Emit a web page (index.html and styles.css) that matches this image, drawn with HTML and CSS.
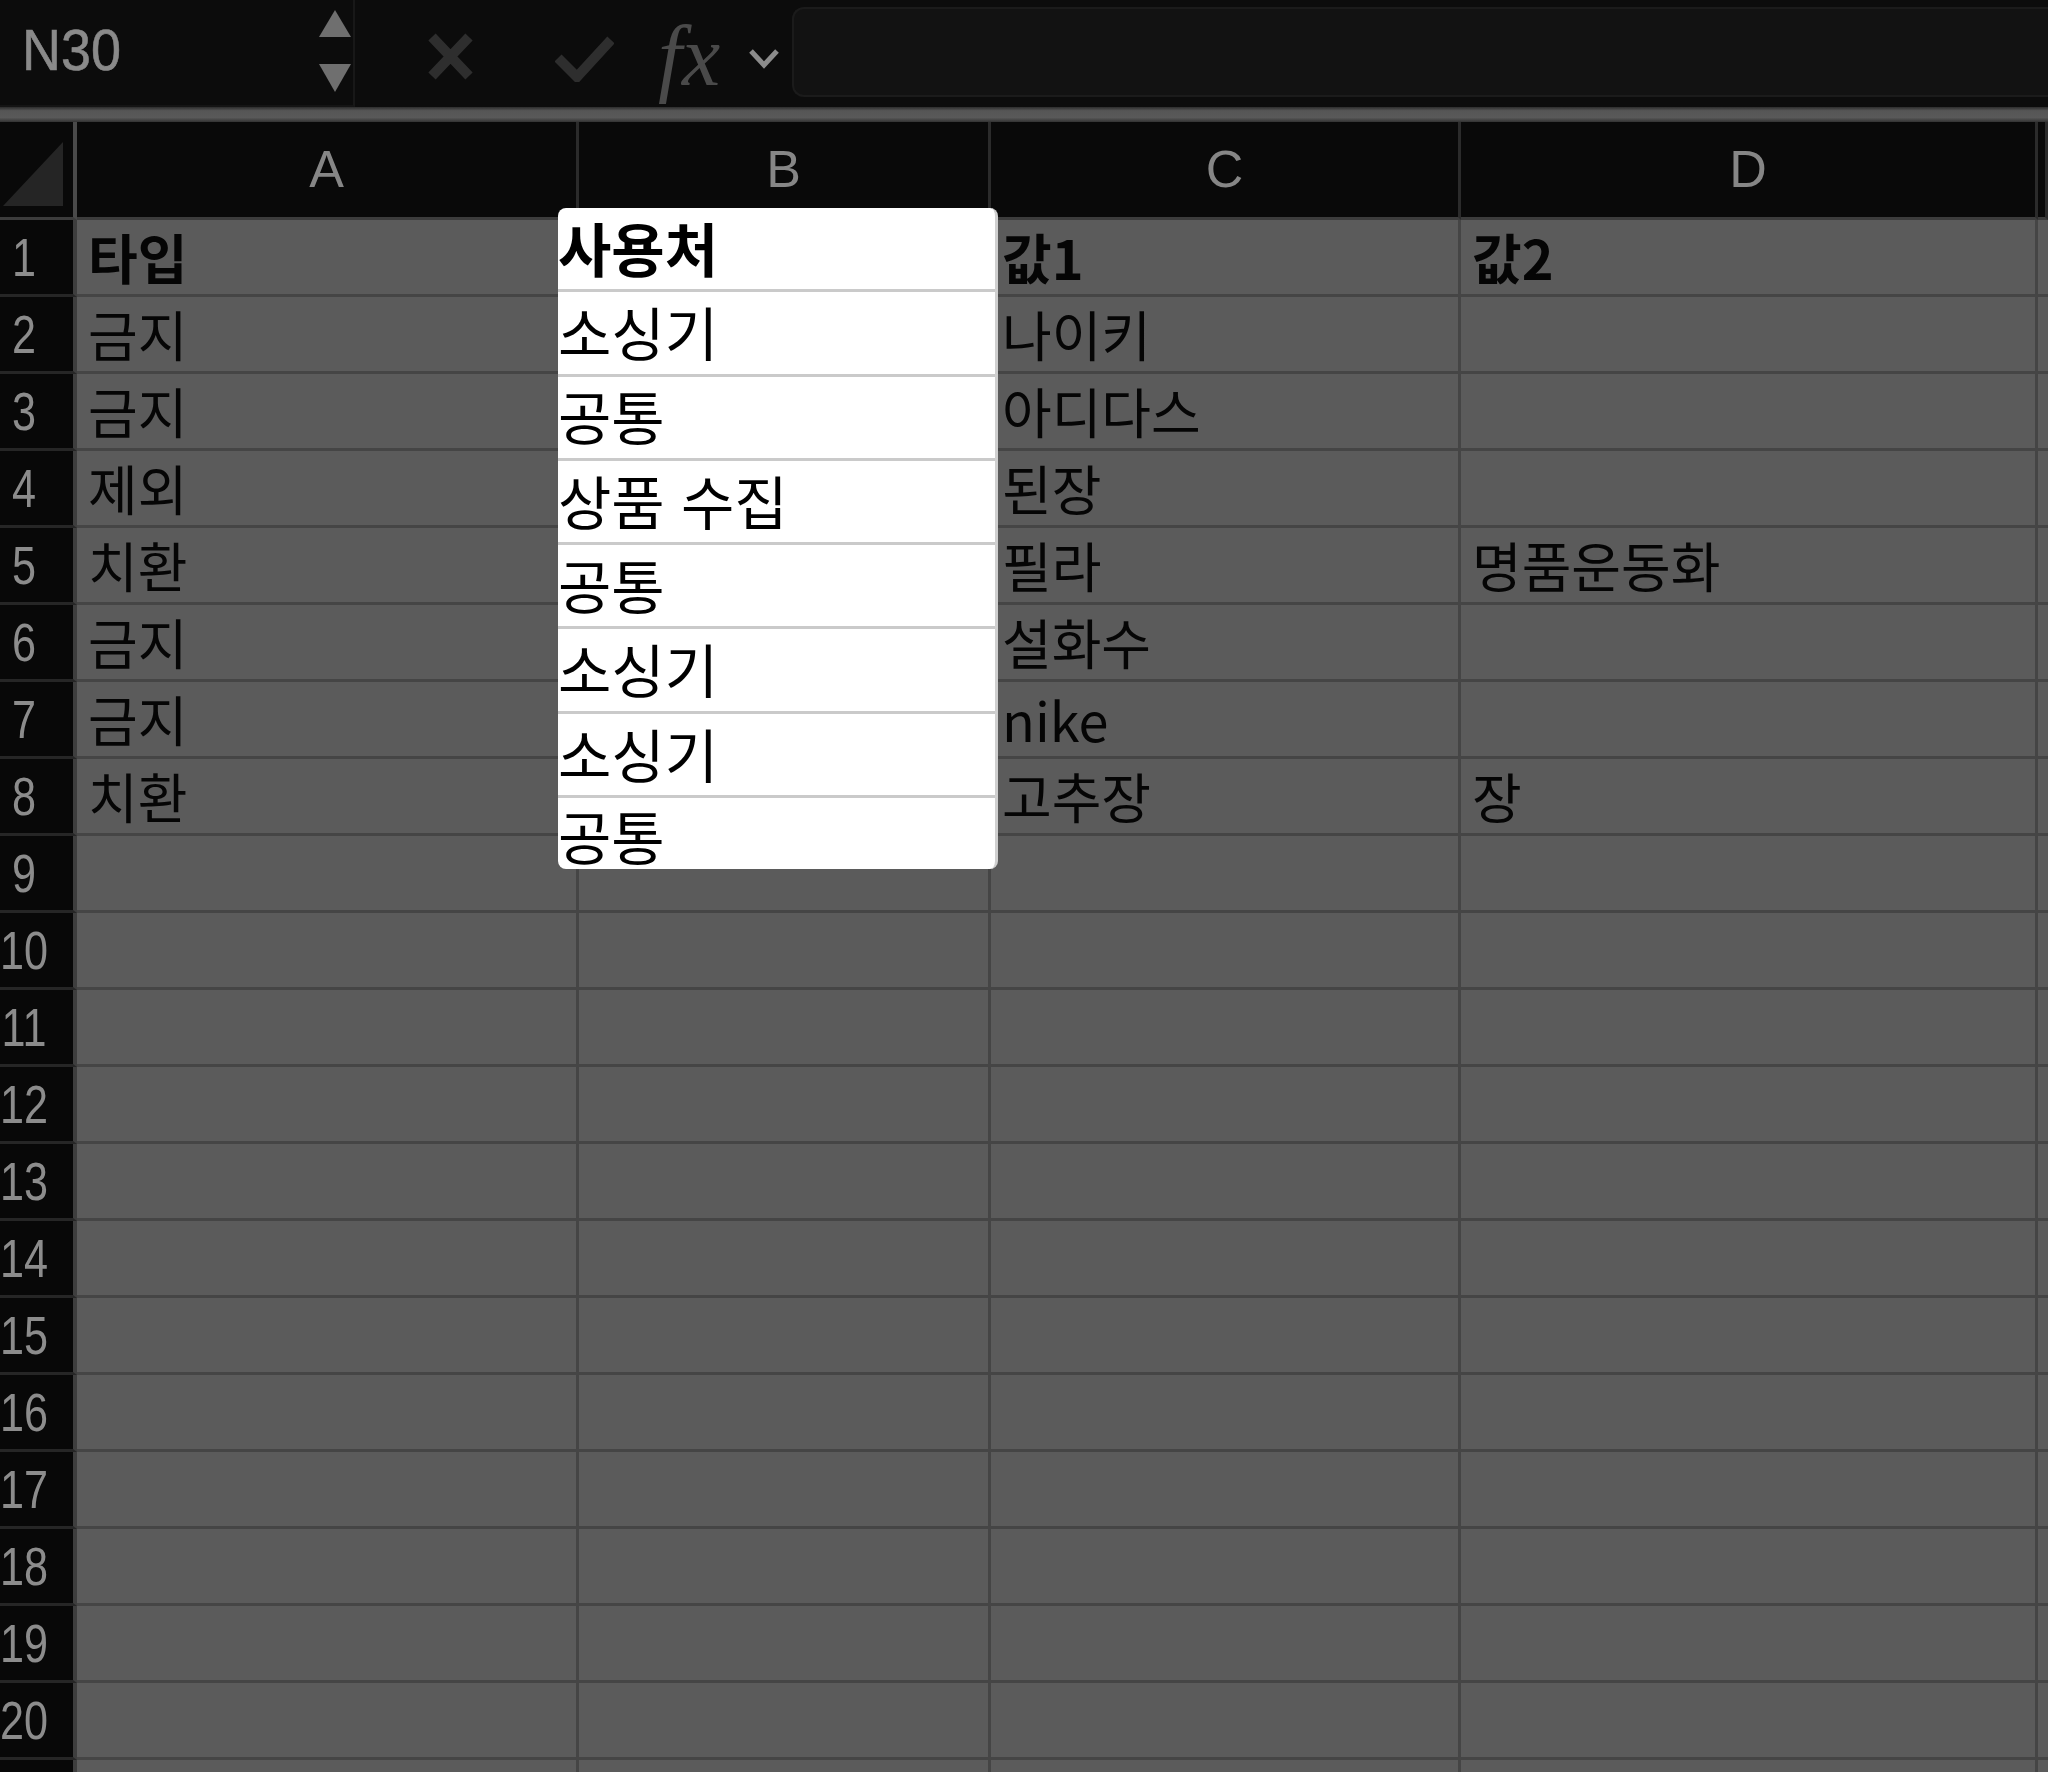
FILE: index.html
```html
<!DOCTYPE html>
<html lang="ko">
<head>
<meta charset="utf-8">
<title>Sheet</title>
<link rel="stylesheet" href="styles.css">
</head>
<body>
<div class="app">
  <div class="toolbar">
    <div class="namebox">
      <span class="name">N30</span>
      <svg class="spin" width="32" height="82" viewBox="0 0 32 82">
        <polygon points="16,0 32,27 0,27" />
        <polygon points="0,54 32,54 16,82" />
      </svg>
    </div>
    <svg class="ic-x" width="45" height="47" viewBox="0 0 45 47">
      <path d="M4 4 L41 43 M41 4 L4 43" />
    </svg>
    <svg class="ic-check" width="59" height="46" viewBox="0 0 59 46">
      <path d="M3 22 L22 41 L56 4" />
    </svg>
    <span class="fx">fx</span>
    <svg class="ic-chev" width="32" height="22" viewBox="0 0 32 22">
      <path d="M3 4 L16 18 L29 4" />
    </svg>
    <div class="formula"></div>
  </div>
  <div class="sep"></div>

  <div class="sheet">
    <div class="corner"><svg width="62" height="66" viewBox="0 0 62 66"><polygon points="0,64 60,64 60,0" /></svg></div>
    <div class="colhead">A</div>
    <div class="colhead">B</div>
    <div class="colhead">C</div>
    <div class="colhead">D</div>
    <div class="colhead"></div>

    <div class="rowhead"><span>1</span></div><div class="cell b">타입</div><div class="cell"></div><div class="cell b">값1</div><div class="cell b">값2</div><div class="cell"></div>
    <div class="rowhead"><span>2</span></div><div class="cell">금지</div><div class="cell"></div><div class="cell">나이키</div><div class="cell"></div><div class="cell"></div>
    <div class="rowhead"><span>3</span></div><div class="cell">금지</div><div class="cell"></div><div class="cell">아디다스</div><div class="cell"></div><div class="cell"></div>
    <div class="rowhead"><span>4</span></div><div class="cell">제외</div><div class="cell"></div><div class="cell">된장</div><div class="cell"></div><div class="cell"></div>
    <div class="rowhead"><span>5</span></div><div class="cell">치환</div><div class="cell"></div><div class="cell">필라</div><div class="cell">명품운동화</div><div class="cell"></div>
    <div class="rowhead"><span>6</span></div><div class="cell">금지</div><div class="cell"></div><div class="cell">설화수</div><div class="cell"></div><div class="cell"></div>
    <div class="rowhead"><span>7</span></div><div class="cell">금지</div><div class="cell"></div><div class="cell">nike</div><div class="cell"></div><div class="cell"></div>
    <div class="rowhead"><span>8</span></div><div class="cell">치환</div><div class="cell"></div><div class="cell">고추장</div><div class="cell">장</div><div class="cell"></div>
    <div class="rowhead"><span>9</span></div><div class="cell"></div><div class="cell"></div><div class="cell"></div><div class="cell"></div><div class="cell"></div>
    <div class="rowhead"><span>10</span></div><div class="cell"></div><div class="cell"></div><div class="cell"></div><div class="cell"></div><div class="cell"></div>
    <div class="rowhead"><span>11</span></div><div class="cell"></div><div class="cell"></div><div class="cell"></div><div class="cell"></div><div class="cell"></div>
    <div class="rowhead"><span>12</span></div><div class="cell"></div><div class="cell"></div><div class="cell"></div><div class="cell"></div><div class="cell"></div>
    <div class="rowhead"><span>13</span></div><div class="cell"></div><div class="cell"></div><div class="cell"></div><div class="cell"></div><div class="cell"></div>
    <div class="rowhead"><span>14</span></div><div class="cell"></div><div class="cell"></div><div class="cell"></div><div class="cell"></div><div class="cell"></div>
    <div class="rowhead"><span>15</span></div><div class="cell"></div><div class="cell"></div><div class="cell"></div><div class="cell"></div><div class="cell"></div>
    <div class="rowhead"><span>16</span></div><div class="cell"></div><div class="cell"></div><div class="cell"></div><div class="cell"></div><div class="cell"></div>
    <div class="rowhead"><span>17</span></div><div class="cell"></div><div class="cell"></div><div class="cell"></div><div class="cell"></div><div class="cell"></div>
    <div class="rowhead"><span>18</span></div><div class="cell"></div><div class="cell"></div><div class="cell"></div><div class="cell"></div><div class="cell"></div>
    <div class="rowhead"><span>19</span></div><div class="cell"></div><div class="cell"></div><div class="cell"></div><div class="cell"></div><div class="cell"></div>
    <div class="rowhead"><span>20</span></div><div class="cell"></div><div class="cell"></div><div class="cell"></div><div class="cell"></div><div class="cell"></div>
    <div class="rowhead"></div><div class="cell"></div><div class="cell"></div><div class="cell"></div><div class="cell"></div><div class="cell"></div>

    <ul class="dropdown">
      <li class="b">사용처</li>
      <li>소싱기</li>
      <li>공통</li>
      <li>상품 수집</li>
      <li>공통</li>
      <li>소싱기</li>
      <li>소싱기</li>
      <li>공통</li>
    </ul>
  </div>
</div>
</body>
</html>
```
FILE: styles.css
```css
html, body {
  margin: 0;
  padding: 0;
  background: #0c0c0c;
}
.app {
  width: 2048px;
  height: 1772px;
  overflow: hidden;
  background: #0c0c0c;
}

/* toolbar */
.toolbar {
  height: 107px;
  display: flex;
  align-items: center;
  background: #0c0c0c;
}
.namebox {
  width: 355px;
  height: 107px;
  box-sizing: border-box;
  border-right: 2px solid #181818;
  border-bottom: 2px solid #141414;
  display: flex;
  align-items: center;
  justify-content: space-between;
  padding: 0 2px 0 22px;
}
.name {
  font-family: "Liberation Sans", Arial, sans-serif;
  font-size: 58px;
  line-height: 1.15;
  color: #8a8a8a;
  display: inline-block;
  transform: scaleX(0.93);
  transform-origin: left center;
  margin-top: -4px;
  -webkit-text-stroke: 0.6px #8a8a8a;
}
.spin {
  fill: #6f6f6f;
  margin-top: -4px;
}
.ic-x {
  margin-left: 73px;
  margin-top: 6px;
  fill: none;
  stroke: #2e2e2e;
  stroke-width: 10;
}
.ic-check {
  margin-left: 82px;
  margin-top: 10px;
  fill: none;
  stroke: #2e2e2e;
  stroke-width: 10;
}
.fx {
  margin-left: 44px;
  width: 70px;
  font-family: "Liberation Serif", "Times New Roman", serif;
  font-style: italic;
  font-size: 86px;
  line-height: 1;
  color: #4a4a4a;
  margin-top: 4px;
}
.ic-chev {
  margin-left: 20px;
  margin-top: 8px;
  fill: none;
  stroke: #8c8c8c;
  stroke-width: 5;
}
.formula {
  flex: 1;
  align-self: flex-start;
  margin: 7px 0 0 12px;
  height: 90px;
  box-sizing: border-box;
  background: #121212;
  border: 2px solid #1b1b1b;
  border-right: none;
  border-radius: 12px 0 0 12px;
}

.sep {
  height: 15px;
  background: linear-gradient(#2c2c2c, #565656 25%, #595959 70%, #333333);
}

/* sheet grid */
.sheet {
  position: relative;
  display: grid;
  grid-template-columns: 77px 502px 412px 470px 577px 10px;
  grid-template-rows: 98px repeat(21, 77px);
}
.corner {
  box-sizing: border-box;
  background: #090909;
  border-right: 4px solid #4a4a4a;
  border-bottom: 3px solid #3c3c3c;
  padding: 20px 0 0 3px;
}
.corner svg {
  display: block;
  fill: #252525;
}
.colhead {
  box-sizing: border-box;
  background: #090909;
  border-right: 3px solid #2b2b2b;
  border-bottom: 3px solid #3c3c3c;
  display: flex;
  align-items: center;
  justify-content: center;
  font-family: "Liberation Sans", Arial, sans-serif;
  font-size: 52px;
  line-height: 1.15;
  color: #868686;
}
.rowhead {
  box-sizing: border-box;
  background: #080808;
  border-right: 4px solid #3e3e3e;
  border-bottom: 3px solid #262626;
  display: flex;
  align-items: center;
  justify-content: center;
  padding-right: 25px;
  font-family: "Liberation Sans", Arial, sans-serif;
  font-size: 54px;
  line-height: 1.15;
  color: #8c8c8c;
  white-space: nowrap;
}
.rowhead span {
  display: inline-block;
  transform: scaleX(0.8);
}
.cell {
  box-sizing: border-box;
  background: #5b5b5b;
  border-right: 3px solid #454545;
  border-bottom: 3px solid #454545;
  display: flex;
  align-items: center;
  padding-left: 11px;
  font-family: "Noto Sans CJK KR", "Noto Sans", sans-serif;
  font-size: 54px;
  line-height: 1.2;
  color: #050505;
  white-space: nowrap;
}
.cell.b {
  font-weight: 700;
}

/* dropdown list overlaying column B */
.dropdown {
  position: absolute;
  left: 558px;
  top: 86px;
  width: 440px;
  margin: 0;
  padding: 0;
  list-style: none;
  box-sizing: border-box;
  background: #ffffff;
  border-right: 3px solid #cfcfcf;
  border-radius: 8px;
}
.dropdown li {
  height: 84.3px;
  box-sizing: border-box;
  border-bottom: 3px solid #cacaca;
  display: flex;
  align-items: center;
  padding-bottom: 2px;
  font-family: "Noto Sans CJK KR", "Noto Sans", sans-serif;
  font-size: 58px;
  line-height: 1.2;
  color: #000000;
  white-space: nowrap;
}
.dropdown li.b {
  font-weight: 700;
}
.dropdown li:last-child {
  height: 71px;
  border-bottom: none;
  padding-bottom: 0;
  padding-top: 4px;
}
```
